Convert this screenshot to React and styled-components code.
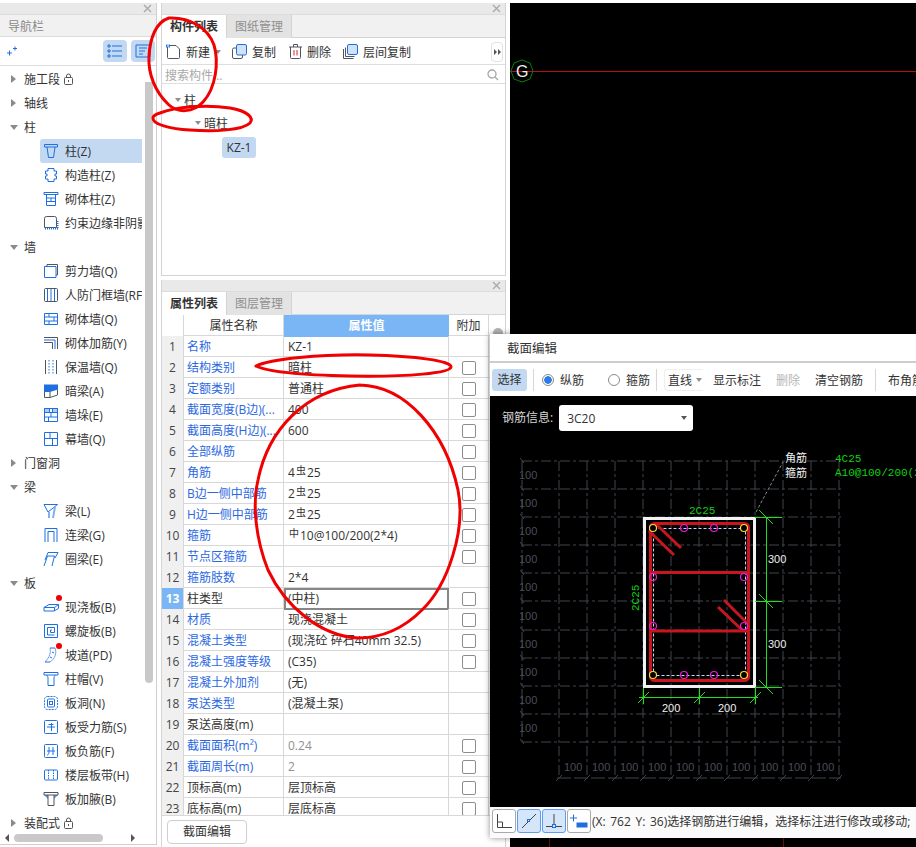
import React from 'react'
import styled, { createGlobalStyle } from 'styled-components'

const BLUE = '#1f6fe0'
const DARK = '#50555f'

const GlobalStyle = createGlobalStyle`
  html, body { margin: 0; padding: 0; background: #fff; }
  body { font-family: "Open Sans", "Noto Sans CJK SC", sans-serif; font-size: 12px; color: #333; }
`

const icons = {
  zhu: <g stroke={BLUE} fill="none"><path d="M1.500 1.500h13v2.500h-13z" /><path d="M4 4l1.500 10.500h5L12 4" /></g>,
  gouzao: <path stroke={BLUE} fill="none" d="M5 1.500h6v2.500h2.500v3h-1.500v2h1.500v3H11v2.500H5V12H2.500V9H4V7H2.500V4H5z" />,
  qiti: <g stroke={BLUE} fill="none"><path d="M1 1.500h14v2H1z" /><path d="M3.500 3.500v11h9v-11M3.500 7h9M3.500 10.500h9M8 7v3.500" /></g>,
  yueshu: <g fill="none"><path stroke={DARK} d="M1.500 3.500a2 2 0 0 1 2-2h8a2 2 0 0 1 2 2v9h-12z" /><path stroke={BLUE} strokeDasharray="1 1" strokeWidth="2" d="M2 13.500h13M14.500 6v8" /></g>,
  jianli: <g fill="none"><path stroke={DARK} d="M4 3V1.500h10.500V12H13" /><path stroke={BLUE} d="M1.500 3.500h11.500v11H1.500z" /></g>,
  renfang: <g fill="none" stroke={DARK}><rect x="1.500" y="1.500" width="13" height="13" rx="1" /><path stroke={BLUE} d="M4.500 2v12M8 2v12M11.500 2v12" /></g>,
  qiang: <g fill="none" stroke={BLUE}><path d="M1.500 2.500h13v11h-13zM1.500 6h13M1.500 10h13M6 2.500V6M11 6v4M6 10v3.500" /></g>,
  jiajin: <g fill="none"><path stroke={DARK} d="M1 2.500h13.500V14" /><path stroke={BLUE} d="M1 5h11v9" /><path stroke={DARK} d="M1 7.500h8.500V14" /></g>,
  baowen: <g fill="none"><path stroke={DARK} d="M2.500 1v14M13.500 1v14" /><path stroke={BLUE} strokeDasharray="1.500 1.500" d="M6 1v14M10 1v14" /></g>,
  anliang: <g><path fill={BLUE} d="M1 1.500h14v5L7 9H1z" /><path fill="none" stroke={DARK} d="M1.500 9v5.500h5.500l7.500-2.500V6.500M7 9v5.500" /></g>,
  duo: <g stroke={BLUE}><path fill="#a9cdf5" d="M1.500 1.500h5v4h-5zM9.500 1.500h5v4h-5z" /><path fill="none" d="M1.500 1.500h13v13h-13zM1.500 5.500h13M1.500 10h13M6.500 1.500v4M9.500 1.500v4M8 5.500V10M5.500 10v4.500" /></g>,
  mu: <path fill="none" stroke={BLUE} d="M1.500 1.500h13v13h-13zM1.500 7.500h13M7 1.500v6M9.500 7.500v7" />,
  liang: <g fill="none" stroke={BLUE}><path d="M1 1.500h13.500L5 9z" /><path stroke="#7fb0ef" strokeWidth="2" d="M6 9v6M12 4l-2 11" /></g>,
  lianliang: <path fill="none" stroke={BLUE} d="M2 15V1.500h12V15M5 15V4.500h6V15" />,
  quan: <path fill="none" stroke={BLUE} d="M5 1.500h10L12 7M1 15l3.500-10h7L9 15M5 1.500L2 9" />,
  xianjiao: <g fill="none" stroke={BLUE}><path d="M1 8.500L6 5.500h9.500v4L11 12H1z" /><path d="M1 8.500h10.500V12M11.500 8.500l4-3" /></g>,
  luoxuan: <path fill="none" stroke={BLUE} d="M1.500 1.500h13v13h-13zM11.500 12H4.500V4.500h7v5h-4V7h1.500" />,
  podao: <g fill="none" stroke="#6fa3ea"><path d="M7 1c1 4 0 9-5 14M12 1c2 5 0 11-5 14" /><path stroke={BLUE} d="M7 1h5M2 15h5M9 5l2 1M7 10l2 1" /></g>,
  zhumao: <g fill="none" stroke={BLUE}><path d="M1 1.500h14v2.500H1z" /><path d="M3.500 4c1 1 1.500 2 1.500 3v7.500h6V7c0-1 .500-2 1.500-3" /></g>,
  bandong: <g fill="none" stroke={BLUE}><rect x="1.500" y="1.500" width="13" height="13" rx="3" strokeDasharray="2 1" /><rect x="4.500" y="4" width="7" height="8" rx="1" /><rect x="6.500" y="6.500" width="3" height="3" /></g>,
  shouli: <g fill="none" stroke={BLUE}><rect x="1.500" y="1.500" width="13" height="13" rx="1" /><path d="M4 8h8M8.500 4v8M5.500 5.500l5 0" /></g>,
  fujin: <g fill="none" stroke={BLUE}><rect x="1.500" y="1.500" width="13" height="13" rx="1" /><path d="M6 4v5c0 2-1 3-2 3M10 4v8M4 8h8" /></g>,
  daidai: <g fill="none" stroke={BLUE}><rect x="1.500" y="3" width="13" height="10" rx="1" /><path strokeDasharray="1.500 1" d="M5.500 3v10M10.500 3v10" /></g>,
  jiaye: <g fill="none"><path fill="#5c9df0" d="M1 4l4 4V4zM15 4l-4 4V4z" /><path stroke={DARK} d="M1 1.500h14V4H1zM5 4v10.500h6V4" /></g>,
}

const navItems = [
  { label: '施工段', locked: true, closed: true },
  { label: '轴线', closed: true },
  { label: '柱' },
  { label: '柱(Z)', icon: 'zhu', selected: true },
  { label: '构造柱(Z)', icon: 'gouzao' },
  { label: '砌体柱(Z)', icon: 'qiti' },
  { label: '约束边缘非阴影区', icon: 'yueshu' },
  { label: '墙' },
  { label: '剪力墙(Q)', icon: 'jianli' },
  { label: '人防门框墙(RF)', icon: 'renfang' },
  { label: '砌体墙(Q)', icon: 'qiang' },
  { label: '砌体加筋(Y)', icon: 'jiajin' },
  { label: '保温墙(Q)', icon: 'baowen' },
  { label: '暗梁(A)', icon: 'anliang' },
  { label: '墙垛(E)', icon: 'duo' },
  { label: '幕墙(Q)', icon: 'mu' },
  { label: '门窗洞', closed: true },
  { label: '梁' },
  { label: '梁(L)', icon: 'liang' },
  { label: '连梁(G)', icon: 'lianliang' },
  { label: '圈梁(E)', icon: 'quan' },
  { label: '板' },
  { label: '现浇板(B)', icon: 'xianjiao', dot: true },
  { label: '螺旋板(B)', icon: 'luoxuan' },
  { label: '坡道(PD)', icon: 'podao', dot: true },
  { label: '柱帽(V)', icon: 'zhumao' },
  { label: '板洞(N)', icon: 'bandong' },
  { label: '板受力筋(S)', icon: 'shouli' },
  { label: '板负筋(F)', icon: 'fujin' },
  { label: '楼层板带(H)', icon: 'daidai' },
  { label: '板加腋(B)', icon: 'jiaye' },
  { label: '装配式', locked: true, closed: true },
]

const Sym = styled.span`
  font-size: 10px;
  position: relative;
  top: -3px;
  margin: 0 1px;
`

const rows = [
  { name: '名称', value: 'KZ-1', blue: true },
  { name: '结构类别', value: '暗柱', blue: true, check: true },
  { name: '定额类别', value: '普通柱', blue: true, check: true },
  { name: '截面宽度(B边)(...', value: '400', blue: true, check: true },
  { name: '截面高度(H边)(...', value: '600', blue: true, check: true },
  { name: '全部纵筋', value: '', blue: true, check: true },
  { name: '角筋', value: <>4<Sym>虫</Sym>25</>, blue: true, check: true },
  { name: 'B边一侧中部筋', value: <>2<Sym>虫</Sym>25</>, blue: true, check: true },
  { name: 'H边一侧中部筋', value: <>2<Sym>虫</Sym>25</>, blue: true, check: true },
  { name: '箍筋', value: <><Sym>中</Sym>10@100/200(2*4)</>, blue: true, check: true },
  { name: '节点区箍筋', value: '', blue: true, check: true },
  { name: '箍筋肢数', value: '2*4', blue: true },
  { name: '柱类型', value: '(中柱)', check: true, active: true },
  { name: '材质', value: '现浇混凝土', blue: true, check: true },
  { name: '混凝土类型', value: '(现浇砼 碎石40mm 32.5)', blue: true, check: true },
  { name: '混凝土强度等级', value: '(C35)', blue: true, check: true },
  { name: '混凝土外加剂', value: '(无)', blue: true },
  { name: '泵送类型', value: '(混凝土泵)', blue: true },
  { name: '泵送高度(m)', value: '' },
  { name: '截面面积(m²)', value: '0.24', blue: true, check: true, muted: true },
  { name: '截面周长(m)', value: '2', blue: true, check: true, muted: true },
  { name: '顶标高(m)', value: '层顶标高', check: true },
  { name: '底标高(m)', value: '层底标高', check: true },
]

function Lock() {
  return (
    <svg width="11" height="12" viewBox="0 0 11 12" fill="none" stroke="#555">
      <rect x="1.500" y="4.500" width="8" height="7" rx="1" />
      <path d="M3.500 4.500V3a2 2 0 0 1 4 0v1.500M5.500 7v2" />
    </svg>
  )
}

function Close() {
  return (
    <svg width="9" height="9" viewBox="0 0 9 9" stroke="#a8a8a8" strokeWidth="1.300">
      <path d="M1 1l7 7M8 1L1 8" />
    </svg>
  )
}

function NavRow({ item }) {
  if (!item.icon) {
    return (
      <GroupRow>
        <Arrow $closed={item.closed} />
        <span>{item.label}</span>
        {item.locked && <LockSlot><Lock /></LockSlot>}
      </GroupRow>
    )
  }
  return (
    <LeafRow $selected={item.selected}>
      <IconSlot>
        <svg width="16" height="16" viewBox="0 0 16 16">{icons[item.icon]}</svg>
        {item.dot && <RedDot />}
      </IconSlot>
      <span>{item.label}</span>
    </LeafRow>
  )
}

function Navigation() {
  return (
    <NavPanel>
      <PanelHeader><Close /></PanelHeader>
      <NavTitle>导航栏</NavTitle>
      <NavTools>
        <svg width="10" height="10" viewBox="0 0 10 10" stroke={BLUE} fill="none">
          <path d="M0 7h5M2.500 4.500v5M6 2.500h4M8 .5v4" />
        </svg>
        <ViewButton style={{ marginLeft: 'auto' }}>
          <svg width="16" height="14" viewBox="0 0 16 14" stroke={BLUE} fill="none">
            <path d="M5 2h10M5 7h10M5 12h10M1 1h2v2H1zM1 6h2v2H1zM1 11h2v2H1z" />
          </svg>
        </ViewButton>
        <ViewButton>
          <svg width="16" height="14" viewBox="0 0 16 14" stroke={BLUE} fill="none">
            <path d="M1 1h14v12H1zM4 4h8M4 7h6M4 10h4" />
          </svg>
        </ViewButton>
      </NavTools>
      <NavBody>
        <TreeList>
          {navItems.map((item) => <NavRow key={item.label} item={item} />)}
        </TreeList>
        <VScroll />
      </NavBody>
      <HScroll>
        <ScrollArrow $left />
        <HThumb />
        <ScrollArrow />
      </HScroll>
    </NavPanel>
  )
}

function ComponentList() {
  return (
    <TopPanel>
      <PanelHeader><Close /></PanelHeader>
      <Tabs>
        <Tab $active>构件列表</Tab>
        <Tab>图纸管理</Tab>
      </Tabs>
      <ListTools>
        <ToolItem $after={5}>
          <svg width="15" height="15" viewBox="0 0 15 15" fill="none" stroke={DARK}>
            <path d="M1.500 3v10.500a1 1 0 0 0 1 1h10a1 1 0 0 0 1-1V5L10 1.500H4" />
            <path stroke="#2b7be8" strokeWidth="3" strokeDasharray="1 .5" d="M0 2h4" />
          </svg>
          新建
        </ToolItem>
        <Caret $after={11} />
        <ToolItem $after={13}>
          <svg width="15" height="15" viewBox="0 0 15 15" fill="none">
            <rect x=".5" y="4" width="10" height="10.500" rx="1.500" stroke={DARK} />
            <rect x="4.500" y=".5" width="10" height="10.500" rx="1.500" fill="#cfe2f8" stroke={BLUE} />
          </svg>
          复制
        </ToolItem>
        <ToolItem $after={12}>
          <svg width="13" height="15" viewBox="0 0 13 15" fill="none" stroke={DARK}>
            <path d="M0 3h13M4.500 3V.5h4V3M1.500 3v10.500a1 1 0 0 0 1 1h8a1 1 0 0 0 1-1V3" />
            <path stroke="#d9262c" d="M5 6v5.500M8 6v5.500" />
          </svg>
          删除
        </ToolItem>
        <ToolItem>
          <svg width="15" height="15" viewBox="0 0 15 15" fill="none">
            <path stroke={DARK} d="M.5 5v9.500h10M2.500 3.500v9h9" />
            <rect x="4.500" y=".5" width="10" height="10" rx="1.500" fill="#cfe2f8" stroke={BLUE} />
          </svg>
          层间复制
        </ToolItem>
        <MoreButton>
          <svg width="7" height="6" viewBox="0 0 7 6" fill="#555"><path d="M0 0l3 3-3 3zM4 0l3 3-3 3z" /></svg>
        </MoreButton>
      </ListTools>
      <SearchBar>
        <SearchHint>搜索构件...</SearchHint>
        <svg width="12" height="12" viewBox="0 0 12 12" fill="none" stroke="#a6a6a6" strokeWidth="1.300">
          <circle cx="5" cy="5" r="4" /><path d="M8 8l3 3" />
        </svg>
      </SearchBar>
      <ComponentTree>
        <TreeLine $indent={13}><Caret $after={3} />柱</TreeLine>
        <TreeLine $indent={33}><Caret $after={3} />暗柱</TreeLine>
        <Chip>KZ-1</Chip>
      </ComponentTree>
    </TopPanel>
  )
}

function PropertyList() {
  return (
    <BottomPanel>
      <PanelHeader><Close /></PanelHeader>
      <Tabs>
        <Tab $active>属性列表</Tab>
        <Tab>图层管理</Tab>
      </Tabs>
      <TableArea>
        <TableHead>
          <IndexCell $head />
          <NameHead>属性名称</NameHead>
          <ValueHead>属性值</ValueHead>
          <ExtraHead>附加</ExtraHead>
        </TableHead>
        {rows.map((row, i) => (
          <TableRow key={row.name}>
            <IndexCell $active={row.active}>{i + 1}</IndexCell>
            <NameCell $blue={row.blue}>{row.name}</NameCell>
            <ValueCell $active={row.active} $muted={row.muted}>{row.value}</ValueCell>
            <ExtraCell>{row.check && <CheckBox />}</ExtraCell>
          </TableRow>
        ))}
      </TableArea>
      <PanelFooter>
        <FooterButton>截面编辑</FooterButton>
      </PanelFooter>
    </BottomPanel>
  )
}

const GRID = '#3f444d'
const gridX = Array.from({ length: 11 }, (_, i) => 559 + i * 28)
const gridY = [461, 489, 517, 545, 573, 601, 630, 658, 686, 714, 742]
const labelY = [475, 503, 531, 559, 587, 616, 644, 672, 700, 728]

function SectionDrawing() {
  const yellow = [[653, 528], [744, 528], [653, 675], [744, 675]]
  const pink = [[684, 528], [714, 528], [684, 675], [714, 675], [653, 577], [744, 577], [653, 626], [744, 626]]
  return (
    <DrawingSvg viewBox="490 441 426 367" width="426" height="367">
      <g stroke={GRID} fill="none" strokeDasharray="10 3 3 3">
        {gridX.map((x) => <path key={x} d={`M${x} 461V776`} />)}
        {gridY.map((y) => <path key={y} d={`M522 ${y}H841`} />)}
        <path d="M522 461V742" />
        <path d="M557 778H841" strokeDasharray="14 3" />
      </g>
      <g stroke={GRID}>
        {gridY.map((y) => <path key={y} d={`M520 ${y - 3}l4 5`} />)}
        {gridX.map((x) => <path key={x} d={`M${x - 3} 781l6-6`} />)}
      </g>
      <g fill="#4a4f59" fontFamily="Liberation Sans, sans-serif" fontSize="11">
        {labelY.map((y) => <text key={y} x="519" y={y + 4}>100</text>)}
        {gridX.slice(0, 10).map((x) => <text key={x} x={x + 5} y="771">100</text>)}
      </g>

      <path d="M756 512L783 462" stroke="#888" strokeDasharray="3 2" />
      <rect x="644.500" y="518.500" width="110" height="168" fill="none" stroke="#f2f2f2" strokeWidth="3" />

      <g fill="none" stroke="#ccd6f0" strokeDasharray="3 2">
        <rect x="653.500" y="528.500" width="92" height="147" />
      </g>
      <g fill="none" stroke="#c8151f" strokeWidth="3">
        <rect x="650.500" y="523.500" width="98" height="157" rx="4" />
        <path d="M650 572.500H749M650 631H749" />
        <path d="M657 525L681 548M649 531L674 555M724 600L747 623M718 607L742 630" />
      </g>
      <g fill="#000" strokeWidth="1.200">
        {pink.map(([x, y]) => <circle key={`${x}${y}`} cx={x} cy={y} r="3.500" stroke="#e81ed8" fill="none" />)}
        {yellow.map(([x, y]) => <circle key={`${x}${y}`} cx={x} cy={y} r="3.500" stroke="#ffd83a" />)}
      </g>

      <g stroke="#1fe01f" fill="none">
        <path d="M766.500 517V687M755 517.500H782M755 601.500H782M755 687.500H782" />
        <path d="M759 510l14 14M759 594l14 14M759 680l14 14" />
        <path d="M639 697.500H758M643.500 688V704M699.500 688V704M755.500 688V704" />
        <path d="M638 703l11-11M694 703l11-11M750 703l11-11" />
      </g>
      <g fontFamily="Liberation Sans, sans-serif" fontSize="11" fill="#f0f0f0">
        <text x="768" y="563">300</text>
        <text x="768" y="648">300</text>
        <text x="662" y="712">200</text>
        <text x="718" y="712">200</text>
      </g>
      <g fontFamily="Liberation Mono, monospace" fontSize="11" fill="#13d013">
        <text x="689" y="514">2C25</text>
        <text x="639" y="611" transform="rotate(-90 639 611)">2C25</text>
        <text x="835" y="462">4C25</text>
        <text x="835" y="476">A10@100/200(2*4)</text>
      </g>
      <g fontSize="11" fill="#f0f0f0">
        <text x="785" y="462">角筋</text>
        <text x="785" y="477">箍筋</text>
      </g>
    </DrawingSvg>
  )
}

function SectionDialog() {
  return (
    <Dialog>
      <DialogTitle>截面编辑</DialogTitle>
      <DialogTools>
        <SelectButton>选择</SelectButton>
        <ToolDivider $left={6} />
        <Radio $left={8} $on />
        <RadioLabel>纵筋</RadioLabel>
        <Radio $left={24} />
        <RadioLabel>箍筋</RadioLabel>
        <ToolDivider $left={6} />
        <LineSelect>直线<Caret /></LineSelect>
        <ToolText $left={10}>显示标注</ToolText>
        <ToolText $left={15} $disabled>删除</ToolText>
        <ToolText $left={15}>清空钢筋</ToolText>
        <ToolDivider $left={12} />
        <ToolText $left={12}>布角筋</ToolText>
      </DialogTools>
      <DialogCanvas>
        <InfoRow>
          <InfoLabel>钢筋信息:</InfoLabel>
          <InfoSelect>3C20<Caret /></InfoSelect>
        </InfoRow>
        <SectionDrawing />
      </DialogCanvas>
      <StatusBar>
        <SnapButton>
          <svg width="16" height="14" viewBox="0 0 16 14" fill="none" stroke="#444"><path d="M1.500 0v13.500H16M1.500 8h5v5.500" /></svg>
        </SnapButton>
        <SnapButton $on>
          <svg width="16" height="16" viewBox="0 0 16 16" fill="none" stroke="#444"><path d="M1 15L15 1" /><rect x="6.500" y="6.500" width="2" height="2" stroke={BLUE} /></svg>
        </SnapButton>
        <SnapButton $on>
          <svg width="16" height="14" viewBox="0 0 16 14" fill="none" stroke="#444"><path d="M8 0v12M0 12.500h16" /><rect x="6.500" y="10.500" width="3" height="3" stroke={BLUE} fill="#d6e6fa" /></svg>
        </SnapButton>
        <SnapButton>
          <svg width="18" height="14" viewBox="0 0 18 14" fill="none" stroke={BLUE}><path d="M0 4h7M3.500 .5v7" /><rect x="7" y="9" width="10" height="4" fill={BLUE} /></svg>
        </SnapButton>
        <StatusText>(X: 762 Y: 36)选择钢筋进行编辑，选择标注进行修改或移动;</StatusText>
      </StatusBar>
    </Dialog>
  )
}

export default function App() {
  return (
    <Page>
      <GlobalStyle />
      <Navigation />
      <MiddleColumn>
        <ComponentList />
        <PropertyList />
      </MiddleColumn>
      <Canvas>
        <svg width="406" height="844" viewBox="510 3 406 844">
          <path d="M510 71.500H916" stroke="#b30f0f" />
          <polygon points="522,60 530,63 533,71 530,79 522,82 514,79 511,71 514,63" fill="none" stroke="#0d7a0d" />
          <text x="516" y="77" fontSize="16" fill="#f0f0f0" fontFamily="Liberation Sans, sans-serif">G</text>
          <path d="M549.500 838V847M783.500 838V847" stroke="#6a1010" />
        </svg>
      </Canvas>
      <ScrollKnob />
      <Annotations viewBox="0 0 916 847" width="916" height="847">
        <g fill="none" stroke="#f00000" strokeWidth="3" strokeLinecap="round">
          <path d="M169 18C190 17 208 28 214 45C219 62 216 88 203 102C193 113 178 113 169 105C155 92 148 74 149 56C150 38 156 22 169 18" />
          <path d="M160 113C175 107 205 104 230 108C248 111 254 118 250 123C243 130 215 132 190 130C170 129 152 124 153 118C153 115 157 114 160 113" />
          <path d="M256 366C270 359 320 354 370 355C415 356 452 361 451 367C450 373 410 377 350 376C300 375 268 372 256 366" />
          <path d="M360 385C405 386 445 430 458 490C466 530 448 585 422 610C402 630 380 638 358 638C320 636 285 606 268 570C256 540 252 505 258 480C268 430 305 390 360 385" />
        </g>
      </Annotations>
      <SectionDialog />
    </Page>
  )
}

const Page = styled.div`
  position: relative;
  width: 916px;
  height: 847px;
  padding-top: 3px;
  box-sizing: border-box;
  display: flex;
  overflow: hidden;
  background: #fff;
`

/* navigation column */
const NavPanel = styled.div`
  width: 157px;
  height: 842px;
  box-sizing: border-box;
  border-right: 1px solid #cfcfcf;
  border-bottom: 1px solid #cfcfcf;
  display: flex;
  flex-direction: column;
  flex: none;
`
const PanelHeader = styled.div`
  height: 11px;
  flex: none;
  background: #e9e9e9;
  border-bottom: 1px solid #dcdcdc;
  display: flex;
  align-items: center;
  justify-content: flex-end;
  padding-right: 4px;
`
const NavTitle = styled.div`
  height: 21px;
  line-height: 23px;
  flex: none;
  padding-left: 8px;
  color: #8a8a8a;
  background: #f1f1f1;
  border-bottom: 1px solid #dcdcdc;
`
const NavTools = styled.div`
  height: 28px;
  flex: none;
  display: flex;
  align-items: center;
  gap: 4px;
  padding: 0 1px 0 7px;
  border-bottom: 1px solid #dcdcdc;
`
const ViewButton = styled.div`
  width: 24px;
  height: 22px;
  border-radius: 4px;
  background: #c2d9f1;
  display: flex;
  align-items: center;
  justify-content: center;
`
const NavBody = styled.div`
  flex: 1;
  min-height: 0;
  display: flex;
  gap: 3px;
`
const TreeList = styled.div`
  width: 142px;
  padding-top: 1px;
  overflow: hidden;
  white-space: nowrap;
`
const GroupRow = styled.div`
  height: 24px;
  display: flex;
  align-items: center;
  padding-left: 11px;
`
const Arrow = styled.span`
  width: 0;
  height: 0;
  margin-right: ${(p) => (p.$closed ? '8px' : '6px')};
  border-style: solid;
  border-color: transparent transparent transparent #8a8a8a;
  border-width: 4px 0 4px 5px;
  ${(p) => !p.$closed && `
    border-color: #8a8a8a transparent transparent transparent;
    border-width: 5px 4px 0 4px;
    margin-left: -1px;
  `}
`
const LockSlot = styled.span`
  display: flex;
  margin-left: 3px;
`
const LeafRow = styled.div`
  height: 24px;
  margin: 0 0 0 40px;
  padding-left: 3px;
  display: flex;
  align-items: center;
  gap: 6px;
  border-radius: 3px 0 0 3px;
  background: ${(p) => (p.$selected ? '#c2d9f1' : 'transparent')};
`
const IconSlot = styled.span`
  position: relative;
  width: 16px;
  height: 16px;
  flex: none;
`
const RedDot = styled.i`
  position: absolute;
  top: -4px;
  right: -3px;
  width: 6px;
  height: 6px;
  border-radius: 50%;
  background: #f00000;
`
const VScroll = styled.div`
  width: 8px;
  height: 601px;
  margin-top: 16px;
  background: #c9c9c9;
  border-radius: 0 0 4px 4px;
`
const HScroll = styled.div`
  height: 10px;
  flex: none;
  display: flex;
  align-items: flex-start;
  padding-left: 5px;
`
const ScrollArrow = styled.span`
  width: 0;
  height: 0;
  border-style: solid;
  border-color: transparent;
  border-width: 4px 0 4px 4px;
  border-left-color: #555;
  margin-left: 28px;
  ${(p) => p.$left && `
    border-width: 4px 4px 4px 0;
    border-right-color: #555;
    margin-left: 0;
  `}
`
const HThumb = styled.div`
  width: 89px;
  height: 8px;
  margin-left: 5px;
  border-radius: 4px;
  background: #c9c9c9;
`

/* middle column */
const MiddleColumn = styled.div`
  width: 345px;
  margin-left: 4px;
  flex: none;
  display: flex;
  flex-direction: column;
  gap: 4px;
`
const TopPanel = styled.div`
  height: 273px;
  box-sizing: border-box;
  border: 1px solid #d4d4d4;
  border-top: none;
  display: flex;
  flex-direction: column;
`
const BottomPanel = styled(TopPanel)`
  height: 567px;
  border-bottom: none;
`
const Tabs = styled.div`
  height: 22px;
  flex: none;
  display: flex;
  background: #f1f1f1;
  border-bottom: 1px solid #d4d4d4;
`
const Tab = styled.div`
  width: 64px;
  text-align: center;
  line-height: 24px;
  font-weight: ${(p) => (p.$active ? 600 : 400)};
  color: ${(p) => (p.$active ? '#333' : '#8f8f8f')};
  background: ${(p) => (p.$active ? '#fff' : '#e3e3e3')};
  border-right: 1px solid #d4d4d4;
  height: 23px;
`
const ListTools = styled.div`
  height: 25px;
  padding: 1px 0 0 4px;
  flex: none;
  display: flex;
  align-items: center;
  border-bottom: 1px solid #dedede;
`
const ToolItem = styled.div`
  display: flex;
  align-items: center;
  gap: 5px;
  margin-right: ${(p) => p.$after || 0}px;
`
const Caret = styled.span`
  display: inline-block;
  width: 0;
  height: 0;
  margin-right: ${(p) => p.$after || 0}px;
  border-style: solid;
  border-color: #8f8f8f transparent transparent transparent;
  border-width: 4px 3px 0 3px;
`
const MoreButton = styled.div`
  margin-left: auto;
  margin-right: 2px;
  width: 10px;
  height: 18px;
  border: 1px solid #e2e2e2;
  border-radius: 4px;
  display: flex;
  align-items: center;
  justify-content: center;
`
const SearchBar = styled.div`
  height: 17px;
  flex: none;
  display: flex;
  align-items: center;
  justify-content: space-between;
  padding: 1px 6px 0 3px;
  border-bottom: 1px solid #dedede;
`
const SearchHint = styled.span`
  color: #a8a8a8;
`
const ComponentTree = styled.div`
  padding-top: 4px;
`
const TreeLine = styled.div`
  height: 23px;
  display: flex;
  align-items: center;
  padding-left: ${(p) => p.$indent}px;
`
const Chip = styled.div`
  width: 34px;
  height: 21px;
  line-height: 21px;
  margin: 3px 0 0 60px;
  text-align: center;
  border-radius: 3px;
  background: #c2d9f1;
`

/* property table */
const TableArea = styled.div`
  height: 500px;
  flex: none;
  overflow: hidden;
  border-bottom: 1px solid #d8d8d8;
`
const TableRow = styled.div`
  height: 21px;
  box-sizing: border-box;
  display: grid;
  grid-template-columns: 22px 100px 165px 40px 1fr;
  border-bottom: 1px solid #d8d8d8;
  line-height: 22px;
`
const TableHead = styled(TableRow)`
  text-align: center;
`
const IndexCell = styled.div`
  text-align: center;
  font-size: 12px;
  border-right: 1px solid #d8d8d8;
  background: ${(p) => (p.$active ? '#7ab5f5' : p.$head ? '#fff' : '#f0f0f0')};
  color: ${(p) => (p.$active ? '#fff' : '#444')};
  font-weight: ${(p) => (p.$active ? 700 : 400)};
`
const NameHead = styled.div`
  border-right: 1px solid #d8d8d8;
`
const ValueHead = styled.div`
  background: #7ab5f5;
  color: #fff;
  font-weight: 600;
`
const ExtraHead = styled.div`
  border-right: 1px solid #d8d8d8;
`
const NameCell = styled.div`
  padding-left: 3px;
  white-space: nowrap;
  overflow: hidden;
  border-right: 1px solid #d8d8d8;
  color: ${(p) => (p.$blue ? '#2a68e0' : '#333')};
`
const ValueCell = styled.div`
  padding-left: 4px;
  white-space: nowrap;
  box-sizing: border-box;
  border-right: 1px solid #d8d8d8;
  color: ${(p) => (p.$muted ? '#8f8f8f' : '#333')};
  ${(p) => p.$active && `
    border: 2px solid #868686;
    padding-left: 2px;
    line-height: 18px;
  `}
`
const ExtraCell = styled.div`
  border-right: 1px solid #d8d8d8;
  display: flex;
  align-items: center;
  justify-content: center;
`
const CheckBox = styled.span`
  width: 12px;
  height: 12px;
  border: 1px solid #8d8d8d;
  border-radius: 2px;
`
const PanelFooter = styled.div`
  flex: 1;
  padding: 4px 0 0 5px;
`
const FooterButton = styled.div`
  width: 78px;
  height: 22px;
  line-height: 22px;
  text-align: center;
  border: 1px solid #cfcfcf;
  border-radius: 4px;
`

/* drawing area on the right */
const Canvas = styled.div`
  flex: 1;
  margin-left: 4px;
  background: #000;
  svg { display: block; }
`
const ScrollKnob = styled.div`
  position: absolute;
  left: 493px;
  top: 328px;
  width: 10px;
  height: 10px;
  border-radius: 50%;
  background: #b5b5b5;
`
const Annotations = styled.svg`
  position: absolute;
  left: 0;
  top: 0;
  pointer-events: none;
`

/* floating dialog */
const Dialog = styled.div`
  position: absolute;
  left: 490px;
  top: 334px;
  width: 440px;
  height: 504px;
  display: flex;
  flex-direction: column;
  background: #fbfbfb;
  box-shadow: 0 0 6px rgba(0, 0, 0, 0.45);
`
const DialogTitle = styled.div`
  height: 27px;
  flex: none;
  line-height: 30px;
  padding-left: 17px;
  font-size: 12.500px;
  background: #fff;
  border-bottom: 2px solid #cdcdcd;
`
const DialogTools = styled.div`
  height: 33px;
  flex: none;
  display: flex;
  align-items: center;
  padding-left: 2px;
  background: #fff;
  white-space: nowrap;
`
const SelectButton = styled.div`
  width: 35px;
  height: 22px;
  line-height: 22px;
  text-align: center;
  border-radius: 3px;
  background: #c2d9f1;
`
const ToolDivider = styled.span`
  width: 1px;
  height: 22px;
  margin-left: ${(p) => p.$left}px;
  background: #d6d6d6;
`
const Radio = styled.span`
  width: 12px;
  height: 12px;
  margin-left: ${(p) => p.$left}px;
  box-sizing: border-box;
  border: 1px solid #8a8a8a;
  border-radius: 50%;
  background: ${(p) => (p.$on ? 'radial-gradient(circle, #2b7be8 0 3.500px, #fff 4px)' : '#fff')};
`
const RadioLabel = styled.span`
  margin-left: 6px;
`
const LineSelect = styled.div`
  width: 39px;
  height: 22px;
  margin-left: 7px;
  padding-left: 3px;
  display: flex;
  align-items: center;
  gap: 4px;
  box-sizing: border-box;
  border: 1px solid #efefef;
  border-right: none;
  border-radius: 4px 0 0 4px;
`
const ToolText = styled.span`
  margin-left: ${(p) => p.$left}px;
  color: ${(p) => (p.$disabled ? '#b5b5b5' : '#333')};
`
const DialogCanvas = styled.div`
  flex: 1;
  min-height: 0;
  overflow: hidden;
  background: #000;
  svg { display: block; }
`
const InfoRow = styled.div`
  height: 45px;
  box-sizing: border-box;
  padding: 9px 0 0 12px;
  display: flex;
  align-items: flex-start;
  gap: 6px;
`
const InfoLabel = styled.span`
  line-height: 26px;
  color: #d6d6d6;
`
const InfoSelect = styled.div`
  width: 134px;
  height: 26px;
  box-sizing: border-box;
  padding: 0 6px 0 8px;
  display: flex;
  align-items: center;
  justify-content: space-between;
  background: #fff;
  border-radius: 3px;
  ${Caret} { border-top-color: #555; }
`
const DrawingSvg = styled.svg``
const StatusBar = styled.div`
  height: 27px;
  padding: 0 0 4px 2px;
  flex: none;
  display: flex;
  align-items: center;
  gap: 1px;
  white-space: nowrap;
  background: #fbfbfb;
`
const SnapButton = styled.div`
  width: 22px;
  height: 22px;
  display: flex;
  align-items: center;
  justify-content: center;
  border: 1px solid ${(p) => (p.$on ? '#5c9df0' : '#a9a9a9')};
  border-radius: 3px;
  background: ${(p) => (p.$on ? '#d6e6fa' : '#fff')};
`
const StatusText = styled.span`
  word-spacing: 1.500px;
`
